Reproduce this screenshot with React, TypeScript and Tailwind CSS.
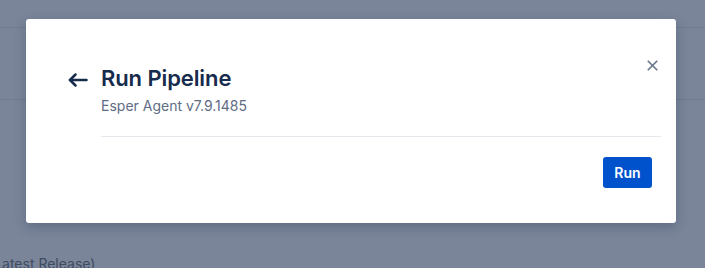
import { X } from "lucide-react";

const font = { fontFamily: "Inter, 'Noto Sans', sans-serif" };

function BackArrow() {
  return (
    <svg width="20" height="14" viewBox="0 0 20 14" fill="none" stroke="#172b4d" strokeWidth="2.5" strokeLinecap="round" strokeLinejoin="round">
      <path d="M18.5 7H2" />
      <path d="M7.5 1.5 2 7l5.5 5.5" />
    </svg>
  );
}

export default function App() {
  return (
    <div className="relative h-[268px] w-[705px] overflow-hidden bg-[#7a8599]" style={font}>
      {/* page behind the overlay */}
      <div className="flex h-full flex-col">
        <div className="h-[28px] border-b border-[#707b90]" />
        <div className="h-[72px] border-b border-[#707b90]" />
        <div className="flex-1" />
        <div className="-ml-[11px] h-[14px] text-[14px] leading-[20px] text-[#3f4b60]">(Latest Release)</div>
      </div>

      {/* modal */}
      <div className="absolute inset-0 pl-[26px] pt-[19px]">
        <div className="relative flex h-[204px] w-[650px] rounded-[3px] bg-white pl-[42px] pr-[15px] pt-[45px] shadow-[0_4px_12px_rgba(9,30,66,0.25)]">
          <button className="absolute right-[14px] top-[36px] flex h-[20px] w-[20px] items-center justify-center text-[#6b778c]">
            <X size={17} strokeWidth={2.4} />
          </button>
          <div className="mr-[12px] flex h-[30px] w-[21px] items-center pt-[1px]">
            <BackArrow />
          </div>
          <div className="flex flex-1 flex-col">
            <h2 className="text-[22px] font-semibold leading-[28px] tracking-[-0.1px] text-[#172b4d]">Run Pipeline</h2>
            <p className="mt-[4px] text-[14px] leading-[20px] text-[#5e6c84]">Esper Agent v7.9.1485</p>
            <div className="mt-[20px] border-t border-[#e4e7ec]" />
            <div className="mt-[20px] flex justify-end pr-[9px]">
              <button className="flex h-[31px] w-[49px] items-center justify-center rounded-[3px] bg-[#0052cc] text-[14px] font-semibold text-white">
                Run
              </button>
            </div>
          </div>
        </div>
      </div>
    </div>
  );
}
